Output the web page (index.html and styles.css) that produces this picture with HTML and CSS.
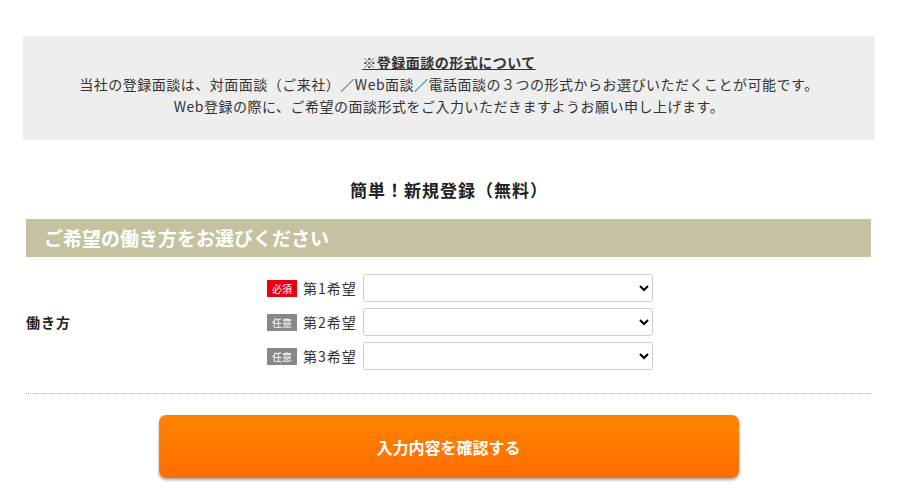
FILE: index.html
```html
<!DOCTYPE html>
<html lang="ja">
<head>
  <meta charset="UTF-8">
  <title>新規登録</title>
  <link rel="stylesheet" href="styles.css">
</head>
<body>

<div class="wrap">
  <div class="notice">
    <p class="notice-title">※登録面談の形式について</p>
    <p>当社の登録面談は、対面面談（ご来社）／Web面談／電話面談の３つの形式からお選びいただくことが可能です。</p>
    <p>Web登録の際に、ご希望の面談形式をご入力いただきますようお願い申し上げます。</p>
  </div>

  <h2 class="lead">簡単！新規登録（無料）</h2>

  <div class="form">
    <h3 class="bar">ご希望の働き方をお選びください</h3>

    <div class="row">
      <div class="row-label">働き方</div>
      <div class="row-fields">
        <div class="choice">
          <span class="badge req">必須</span>
          <span class="choice-name">第1希望</span>
          <select><option></option></select>
        </div>
        <div class="choice">
          <span class="badge opt">任意</span>
          <span class="choice-name">第2希望</span>
          <select><option></option></select>
        </div>
        <div class="choice">
          <span class="badge opt">任意</span>
          <span class="choice-name">第3希望</span>
          <select><option></option></select>
        </div>
      </div>
    </div>

    <div class="submit">
      <button type="button">入力内容を確認する</button>
    </div>
  </div>
</div>

</body>
</html>
```

FILE: styles.css
```css
body {
  margin: 0;
  font-family: "Noto Sans CJK JP", "Noto Sans", sans-serif;
  color: #333;
  background: #fff;
}
p, h2, h3 {
  margin: 0;
}
.wrap {
  width: 852px;
  margin: 0 auto;
  padding-top: 36px;
}
.notice {
  background-color: #eeeeee;
  text-align: center;
  font-size: 14px;
  line-height: 22px;
  letter-spacing: 0.5px;
  padding: 15px 0 23px;
}
.notice-title {
  font-weight: bold;
  text-decoration: underline;
}
.lead {
  text-align: center;
  font-size: 17px;
  line-height: 24px;
  letter-spacing: 1px;
  font-weight: bold;
  margin-top: 38px;
  color: #222;
}
.form {
  margin: 17px 4px 0 3px;
}
.bar {
  background-color: #c6c19f;
  color: #fff;
  font-size: 19px;
  font-weight: bold;
  line-height: 38px;
  padding-left: 18px;
}
.row {
  display: flex;
  align-items: center;
  padding: 17px 0 23px;
  border-bottom: 1px dotted #aaa;
}
.row-label {
  width: 241px;
  font-size: 14px;
  font-weight: bold;
  letter-spacing: 1px;
  color: #222;
}
.row-fields {
  display: flex;
  flex-direction: column;
  gap: 6px;
}
.choice {
  display: flex;
  align-items: center;
}
.badge {
  display: inline-block;
  width: 30px;
  height: 17px;
  line-height: 17px;
  font-size: 10px;
  color: #fff;
  text-align: center;
  margin-right: 6px;
}
.req {
  background-color: #e60012;
}
.opt {
  background-color: #888;
}
.choice-name {
  font-size: 14px;
  letter-spacing: 1px;
  color: #333;
  margin-right: 6px;
}
select {
  width: 290px;
  height: 28px;
  border: 1px solid #ccc;
  border-radius: 3px;
  background-color: #fff;
}
.submit {
  padding: 21px 0 10px;
  text-align: center;
}
.submit button {
  width: 580px;
  height: 63px;
  border: none;
  border-radius: 7px;
  background: linear-gradient(#ff8500, #ff6c00);
  box-shadow: 0 2px 3px rgba(0, 0, 0, 0.35);
  color: #fff;
  font-family: inherit;
  font-size: 16px;
  font-weight: bold;
}
```
